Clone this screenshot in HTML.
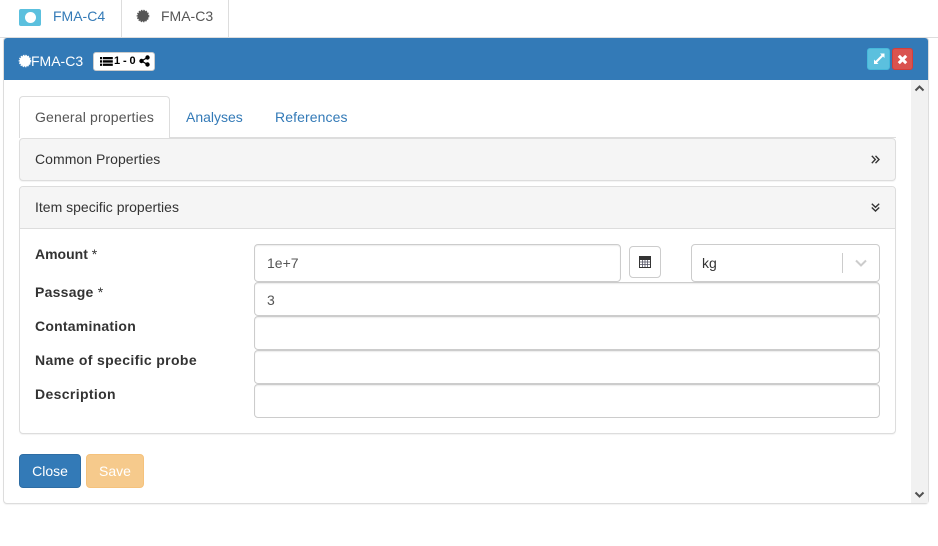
<!DOCTYPE html>
<html><head><meta charset="utf-8">
<style>
html,body{margin:0;padding:0;background:#fff;}
body{width:938px;height:546px;position:relative;overflow:hidden;font-family:"Liberation Sans",sans-serif;font-size:14px;color:#333;}
.a{position:absolute;box-sizing:border-box;}
.t{position:absolute;white-space:nowrap;line-height:20px;}
.in{position:absolute;box-sizing:border-box;left:254px;width:626px;background:#fff;border:1px solid #ccc;border-radius:4px;box-shadow:inset 0 1px 1px rgba(0,0,0,.075);color:#555;}
.lb{position:absolute;left:35px;font-weight:bold;white-space:nowrap;line-height:20px;color:#333;}
.lb span{font-weight:normal;}
svg{position:absolute;display:block;}
</style></head><body>
<!-- top tabs -->
<div class="a" style="left:0;top:37px;width:938px;height:1px;background:#ddd;"></div>
<div class="a" style="left:121px;top:0;width:108px;height:38px;background:#fff;border-left:1px solid #ddd;border-right:1px solid #ddd;"></div>
<div class="a" style="left:19px;top:9px;width:22px;height:17px;background:#5bc0de;border-radius:2px;"></div>
<div class="a" style="left:25px;top:12px;width:11px;height:11px;background:#fff;border-radius:50%;"></div>
<div class="t" style="left:53px;top:6px;color:#337ab7;">FMA-C4</div>
<svg style="left:136px;top:9px" width="14" height="14" viewBox="0 0 14 14"><circle cx="7" cy="7" r="5.400" fill="#555"/><circle cx="7" cy="7" r="5.800" fill="none" stroke="#555" stroke-width="1" stroke-dasharray="1.500 1"/></svg>
<div class="t" style="left:161px;top:6px;color:#555;">FMA-C3</div>

<!-- panel -->
<div class="a" style="left:3px;top:37px;width:926px;height:467px;background:#fff;border:1px solid #ddd;border-radius:4px;box-shadow:0 1px 1px rgba(0,0,0,.05);"></div>
<div class="a" style="left:4px;top:38px;width:924px;height:42px;background:#337ab7;border-radius:3px 3px 0 0;"></div>
<svg style="left:18px;top:54px" width="14" height="14" viewBox="0 0 14 14"><circle cx="7" cy="7" r="5.400" fill="#fff"/><circle cx="7" cy="7" r="5.800" fill="none" stroke="#fff" stroke-width="1" stroke-dasharray="1.500 1"/></svg>
<div class="t" style="left:31px;top:51px;color:#fff;">FMA-C3</div>
<div class="a" style="left:93px;top:52px;width:62px;height:19px;background:#fff;border:1px solid #ccc;border-radius:3px;"></div>
<svg style="left:100px;top:56px" width="13" height="11" viewBox="0 0 13 11"><path d="M0 1h2v2.300H0zM2.800 1h10v2.300H2.800zM0 4.300h2v2.300H0zM2.800 4.300h10v2.300H2.800zM0 7.600h2v2.300H0zM2.800 7.600h10v2.300H2.800z" fill="#000"/></svg>
<div class="t" style="left:114px;top:51px;color:#000;font-weight:bold;font-size:11px;letter-spacing:-.1px;">1 - 0</div>
<svg style="left:139px;top:55px" width="11" height="12" viewBox="0 0 11 12"><path d="M8.500 2.500L2.500 6l6 3.500" fill="none" stroke="#000" stroke-width="1.300"/><circle cx="8.500" cy="2.500" r="2.200" fill="#000"/><circle cx="2.500" cy="6" r="2.200" fill="#000"/><circle cx="8.500" cy="9.500" r="2.200" fill="#000"/></svg>
<!-- header buttons -->
<div class="a" style="left:867px;top:48px;width:23px;height:22px;background:#5bc0de;border:1px solid #46b8da;border-radius:3px;"></div>
<svg style="left:872px;top:52px" width="14" height="14" viewBox="0 0 14 14"><path d="M8 1.500h4.500V6L11 4.500 5 10.500 6.500 12H2V7.500L3.500 9l6-6z" fill="#fff"/></svg>
<div class="a" style="left:892px;top:48px;width:21px;height:22px;background:#d9534f;border:1px solid #d43f3a;border-radius:3px;"></div>
<svg style="left:897px;top:54px" width="11" height="11" viewBox="0 0 11 11"><path d="M1.800 1.800l7.400 7.400M9.200 1.800L1.800 9.200" stroke="#fff" stroke-width="3" fill="none"/></svg>

<!-- scrollbar -->
<div class="a" style="left:911px;top:80px;width:17px;height:423px;background:#f1f1f1;"></div>
<svg style="left:914px;top:84px" width="11" height="9" viewBox="0 0 11 9"><path d="M1.500 6.500L5.500 2.500l4 4" fill="none" stroke="#505050" stroke-width="2"/></svg>
<svg style="left:914px;top:490px" width="11" height="9" viewBox="0 0 11 9"><path d="M1.500 2.500L5.500 6.500l4-4" fill="none" stroke="#505050" stroke-width="2"/></svg>

<!-- inner tabs -->
<div class="a" style="left:19px;top:137px;width:877px;height:1px;background:#ddd;"></div>
<div class="a" style="left:19px;top:96px;width:151px;height:42px;background:#fff;border:1px solid #ddd;border-bottom:0;border-radius:4px 4px 0 0;"></div>
<div class="t" style="left:35px;top:107px;color:#555;letter-spacing:.17px;">General properties</div>
<div class="t" style="left:186px;top:107px;color:#337ab7;">Analyses</div>
<div class="t" style="left:275px;top:107px;color:#337ab7;letter-spacing:.1px;">References</div>

<!-- common properties -->
<div class="a" style="left:19px;top:138px;width:877px;height:43px;background:#f5f5f5;border:1px solid #ddd;border-radius:4px;box-shadow:0 1px 1px rgba(0,0,0,.05);"></div>
<div class="t" style="left:35px;top:149px;color:#333;letter-spacing:.05px;">Common Properties</div>
<svg style="left:871px;top:155px" width="9" height="9" viewBox="0 0 9 9"><path d="M.8 .8l3.500 3.700-3.500 3.700M4.500 .8l3.500 3.700-3.500 3.700" fill="none" stroke="#333" stroke-width="1.400"/></svg>

<!-- item specific -->
<div class="a" style="left:19px;top:186px;width:877px;height:248px;background:#fff;border:1px solid #ddd;border-radius:4px;box-shadow:0 1px 1px rgba(0,0,0,.05);"></div>
<div class="a" style="left:20px;top:187px;width:875px;height:42px;background:#f5f5f5;border-bottom:1px solid #ddd;border-radius:3px 3px 0 0;"></div>
<div class="t" style="left:35px;top:197px;color:#333;">Item specific properties</div>
<svg style="left:871px;top:203px" width="9" height="9" viewBox="0 0 9 9"><path d="M.8 .8l3.700 3.500 3.700-3.500M.8 4.500l3.700 3.500 3.700-3.500" fill="none" stroke="#333" stroke-width="1.400"/></svg>

<div class="lb" style="top:244px;">Amount <span>*</span></div>
<div class="lb" style="top:282px;letter-spacing:.25px;">Passage <span>*</span></div>
<div class="lb" style="top:316px;letter-spacing:.23px;">Contamination</div>
<div class="lb" style="top:350px;letter-spacing:.36px;">Name of specific probe</div>
<div class="lb" style="top:384px;letter-spacing:.36px;">Description</div>

<div class="in" style="top:244px;width:367px;height:38px;"></div>
<div class="t" style="left:267px;top:253px;color:#555;">1e+7</div>
<div class="a" style="left:629px;top:246px;width:32px;height:32px;background:#fff;border:1px solid #ccc;border-radius:4px;"></div>
<svg style="left:639px;top:256px" width="12" height="12" viewBox="0 0 12 12"><rect x=".5" y=".5" width="11" height="11" fill="#fff" stroke="#333"/><rect x="1" y="1" width="10" height="3" fill="#333"/><path d="M1 6h10M1 8.500h10M3.500 4v7M6 4v7M8.500 4v7" stroke="#556" stroke-width=".8"/></svg>
<div class="a" style="left:691px;top:244px;width:189px;height:38px;background:#fff;border:1px solid #ccc;border-radius:4px;"></div>
<div class="t" style="left:702px;top:253px;color:#333;">kg</div>
<div class="a" style="left:842px;top:253px;width:1px;height:20px;background:#ccc;"></div>
<svg style="left:855px;top:259px" width="12" height="9" viewBox="0 0 12 9"><path d="M1 1.500l5 5 5-5" fill="none" stroke="#ccc" stroke-width="2"/></svg>

<div class="in" style="top:282px;height:34px;"></div>
<div class="t" style="left:267px;top:290px;color:#555;">3</div>
<div class="in" style="top:316px;height:34px;"></div>
<div class="in" style="top:350px;height:34px;"></div>
<div class="in" style="top:384px;height:34px;"></div>

<!-- buttons -->
<div class="a" style="left:19px;top:454px;width:62px;height:34px;background:#337ab7;border:1px solid #2e6da4;border-radius:4px;color:#fff;text-align:center;line-height:32px;">Close</div>
<div class="a" style="left:86px;top:454px;width:58px;height:34px;background:#f6ca8c;border:1px solid #f5c27c;border-radius:4px;color:#fff;text-align:center;line-height:32px;">Save</div>
</body></html>
